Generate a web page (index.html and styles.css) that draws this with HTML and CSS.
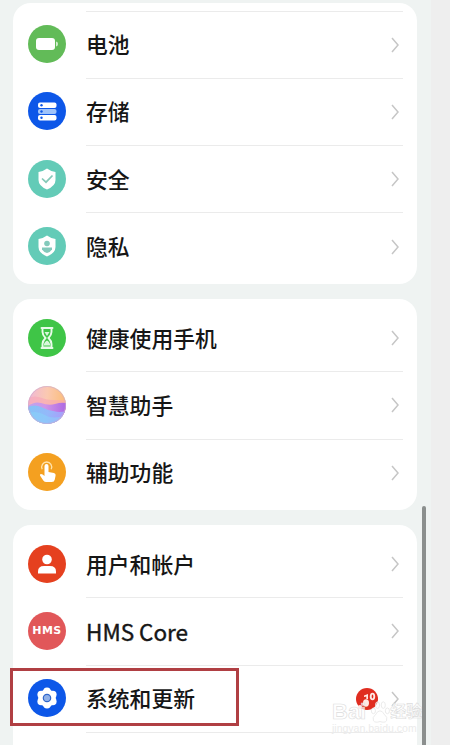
FILE: index.html
```html
<!DOCTYPE html>
<html lang="zh-CN">
<head>
  <meta charset="UTF-8">
  <title>设置</title>
  <link rel="stylesheet" href="styles.css">
</head>
<body>
  <div class="screen">
    <div class="card first">
      <div class="row">
        <svg class="icon" viewBox="0 0 38 38"><circle cx="19" cy="19" r="19" fill="#62bb58"/><rect x="8" y="13" width="19" height="12" rx="3" fill="#fff"/><path d="M28 16.5q2 .3 2 2.5t-2 2.5z" fill="#d5efd1"/></svg>
        <div class="item"><span>电池</span><svg class="arrow" viewBox="0 0 10 16"><path d="M2 1l6 7-6 7"/></svg></div>
      </div>
      <div class="row">
        <svg class="icon" viewBox="0 0 38 38"><circle cx="19" cy="19" r="19" fill="#0d57e8"/><rect x="10" y="10.5" width="18.5" height="5.5" rx="2" fill="#fff"/><rect x="10" y="17" width="18.500" height="5" rx="2" fill="#9fc3fa"/><rect x="10" y="23" width="18.500" height="5.500" rx="2" fill="#fff"/><g fill="#0d57e8"><circle cx="13.500" cy="13.200" r="1.200"/><circle cx="13.500" cy="19.500" r="1.200"/><circle cx="13.500" cy="25.800" r="1.200"/></g></svg>
        <div class="item"><span>存储</span><svg class="arrow" viewBox="0 0 10 16"><path d="M2 1l6 7-6 7"/></svg></div>
      </div>
      <div class="row">
        <svg class="icon" viewBox="0 0 38 38"><circle cx="19" cy="19" r="19" fill="#63cbb7"/><path d="M19 8.500q4 3 8.500 3.500v8q0 6-8.500 9.500-8.500-3.500-8.500-9.500v-8q4.500-.5 8.500-3.500z" fill="#fff"/><path d="M14 18.500l4 3.700 6.500-6.700" fill="none" stroke="#85c9b8" stroke-width="1.700"/></svg>
        <div class="item"><span>安全</span><svg class="arrow" viewBox="0 0 10 16"><path d="M2 1l6 7-6 7"/></svg></div>
      </div>
      <div class="row">
        <svg class="icon" viewBox="0 0 38 38"><circle cx="19" cy="19" r="19" fill="#63cbb7"/><path d="M19 8.500q4 3 8.500 3.500v8q0 6-8.500 9.500-8.500-3.500-8.500-9.500v-8q4.500-.5 8.500-3.500z" fill="#fff"/><circle cx="19" cy="16.500" r="2.800" fill="#83c9bb"/><path d="M14 20.500h10v2q-1.500 2.500-5 3.500-3.500-1-5-3.500z" fill="#83c9bb"/></svg>
        <div class="item"><span>隐私</span><svg class="arrow" viewBox="0 0 10 16"><path d="M2 1l6 7-6 7"/></svg></div>
      </div>
    </div>

    <div class="card">
      <div class="row">
        <svg class="icon" viewBox="0 0 38 38"><circle cx="19" cy="19" r="19" fill="#3fc547"/><path d="M13.500 9h11M13.500 29h11M14.500 9.500v3.500q0 3 3 6-3 3-3 6v3.500h9v-3.500q0-3-3-6 3-3 3-6v-3.500" fill="none" stroke="#e9fbea" stroke-width="1.900" stroke-linecap="round"/><path d="M16.500 13h5l-2.500 4zM15.500 26.500q1-4 3.500-5 2.500 1 3.500 5z" fill="#d9f7db"/></svg>
        <div class="item"><span>健康使用手机</span><svg class="arrow" viewBox="0 0 10 16"><path d="M2 1l6 7-6 7"/></svg></div>
      </div>
      <div class="row">
        <svg class="icon" viewBox="0 0 38 38">
          <defs>
            <linearGradient id="sky" x1="0" y1=".2" x2="1" y2=".3"><stop offset="0" stop-color="#efb7d6"/><stop offset=".5" stop-color="#fbc9b1"/><stop offset="1" stop-color="#fbbd78"/></linearGradient>
            <linearGradient id="wave" x1="0" y1="0" x2="1" y2="0"><stop offset="0" stop-color="#bca5ed"/><stop offset=".45" stop-color="#cf96e8"/><stop offset="1" stop-color="#ae68e2"/></linearGradient>
            <linearGradient id="sea" x1="0" y1="0" x2="1" y2=".3"><stop offset="0" stop-color="#84c4f5"/><stop offset=".6" stop-color="#94b8fa"/><stop offset="1" stop-color="#a99dfa"/></linearGradient>
            <clipPath id="ball"><circle cx="19" cy="19" r="19"/></clipPath>
          </defs>
          <g clip-path="url(#ball)">
            <path d="M0 0h38v38H0z" fill="url(#sky)"/>
            <path d="M0 12q7-3 14 0t24 2v9H0z" fill="#f8a5b5" opacity=".6"/>
            <path d="M0 20q7-5 13-3 8 3 14 1 6-2 11-1v21H0z" fill="url(#wave)"/>
            <path d="M0 21q7-3 13 0t12 4q7 2 13 0v13H0z" fill="url(#sea)"/>
            <path d="M0 27q9-3 17 2t21 0v9H0z" fill="#88d5fa" opacity=".5"/>
          </g>
          <circle cx="19" cy="19" r="18.500" fill="none" stroke="#c8acd2" opacity=".6"/>
        </svg>
        <div class="item"><span>智慧助手</span><svg class="arrow" viewBox="0 0 10 16"><path d="M2 1l6 7-6 7"/></svg></div>
      </div>
      <div class="row">
        <svg class="icon" viewBox="0 0 38 38"><circle cx="19" cy="19" r="19" fill="#f4a020"/><path d="M14.200 16.200a5 5 0 1 1 9 0" fill="none" stroke="#ffe3ad" stroke-width="1.300"/><path d="M16.500 13q0-2 2-2t2 2v6l5.500 1q2 .5 1.600 2.500l-.8 4q-.5 2.500-3 2.500h-5.500q-1.800 0-3-1.500L12 22.500q-.5-1.500 1-1.500 1.500 0 3.500 2z" fill="#fff"/></svg>
        <div class="item"><span>辅助功能</span><svg class="arrow" viewBox="0 0 10 16"><path d="M2 1l6 7-6 7"/></svg></div>
      </div>
    </div>

    <div class="card last">
      <div class="row">
        <svg class="icon" viewBox="0 0 38 38"><circle cx="19" cy="19" r="19" fill="#e5401f"/><circle cx="19" cy="14.500" r="4.800" fill="#fff"/><path d="M10 28.500v-2q0-5.500 6-5.500h6q6 0 6 5.500v2z" fill="#fff"/></svg>
        <div class="item"><span>用户和帐户</span><svg class="arrow" viewBox="0 0 10 16"><path d="M2 1l6 7-6 7"/></svg></div>
      </div>
      <div class="row">
        <div class="icon hms">HMS</div>
        <div class="item"><span class="latin">HMS Core</span><svg class="arrow" viewBox="0 0 10 16"><path d="M2 1l6 7-6 7"/></svg></div>
      </div>
      <div class="row">
        <svg class="icon" viewBox="0 0 38 38"><circle cx="19" cy="19" r="19" fill="#0d57e8"/><g fill="#fff"><circle cx="19" cy="19" r="8.800"/><circle cx="19" cy="12.300" r="3.800"/><circle cx="24.800" cy="15.600" r="3.800"/><circle cx="24.800" cy="22.400" r="3.800"/><circle cx="19" cy="25.700" r="3.800"/><circle cx="13.200" cy="22.400" r="3.800"/><circle cx="13.200" cy="15.600" r="3.800"/></g><circle cx="19" cy="19" r="3.700" fill="#8fb0e8" stroke="#2f65ca" stroke-width="1.200"/></svg>
        <div class="item">
          <span>系统和更新</span>
          <svg class="badge" viewBox="0 0 22 22"><circle cx="11" cy="11" r="11" fill="#e02d20"/><g fill="#ffe9e4"><ellipse cx="10" cy="15" rx="3" ry="3.700"/><ellipse cx="16.500" cy="8.500" rx="2.700" ry="3.800"/><path d="M8 7.500l4-1.500v5h-1.700V8.500L8 9z"/><circle cx="4" cy="19" r="2"/></g><ellipse cx="16.500" cy="8.500" rx=".8" ry="2" fill="#e02d20"/></svg>
          <svg class="arrow" viewBox="0 0 10 16"><path d="M2 1l6 7-6 7"/></svg>
        </div>
      </div>
      <div class="row"><div class="item"></div></div>
    </div>

    <div class="highlight"></div>
    <div class="watermark">
      <div class="brand"><span>Bai</span><svg class="paw" viewBox="0 0 24 28"><ellipse cx="4" cy="12" rx="2.500" ry="3.500"/><ellipse cx="9" cy="5" rx="2.500" ry="4"/><ellipse cx="16" cy="5" rx="2.500" ry="4"/><ellipse cx="21" cy="12" rx="2.500" ry="3.500"/><path d="M12 12q-3 0-5 4-5 4-3 8 2 3 8 1 6 2 8-1 2-4-3-8-2-4-5-4z"/></svg><span class="cn">经验</span></div>
      <div class="site">jingyan.baidu.com</div>
    </div>
    <div class="scrollbar"></div>
  </div>
</body>
</html>
```
FILE: styles.css
```css
body {
  margin: 0;
  background: #eeeeee;
  font-family: 'Noto Sans CJK SC', sans-serif;
  color: #161616;
}

.screen {
  position: relative;
  box-sizing: border-box;
  width: 431px;
  height: 745px;
  padding: 3px 14px 0 13px;
  background: #eff3f2;
  overflow: hidden;
}

.card {
  box-sizing: border-box;
  height: 211px;
  margin-bottom: 15px;
  padding: 5px 14px 0 15px;
  border-radius: 18px;
  background: #fff;
}

.first {
  height: 281px;
  padding-top: 7.5px;
}

.last {
  height: 260px;
}

.row {
  display: flex;
  height: 67.3px;
  align-items: center;
}

.icon {
  flex: none;
  width: 38px;
  height: 38px;
  margin-right: 20px;
}

.item {
  box-sizing: border-box;
  display: flex;
  flex: 1;
  height: 100%;
  align-items: center;
  border-top: 1px solid #ebebeb;
  font-size: 21.8px;
  font-weight: 500;
  line-height: 30px;
}

.item span {
  padding-bottom: 1px;
}

.row:last-child > .item:empty {
  margin-left: 58px;
}

.card:not(.first) .row:first-child .item {
  border-top-color: transparent;
}

.item .latin {
  padding-bottom: 0;
  font-size: 22.5px;
  font-weight: 400;
  -webkit-text-stroke: 0.4px #161616;
}

.arrow {
  width: 10px;
  height: 16px;
  margin-left: auto;
  margin-right: 3px;
  fill: none;
  stroke: #c6c6c6;
  stroke-width: 1.5;
}

.hms {
  border-radius: 50%;
  background: #e15759;
  color: #fff;
  font: bold 11px/38px 'DejaVu Sans', sans-serif;
  letter-spacing: 0.5px;
  text-align: center;
}

.badge {
  width: 22px;
  height: 22px;
  margin-left: auto;
}

.badge + .arrow {
  margin-left: 12px;
}

.highlight {
  position: absolute;
  box-sizing: border-box;
  top: 668px;
  left: 10px;
  width: 229px;
  height: 58px;
  border: 3px solid #b03f43;
}

.scrollbar {
  position: absolute;
  top: 506px;
  left: 422px;
  width: 4px;
  height: 250px;
  border-radius: 2px;
  background: #8b8f8e;
}

.watermark {
  position: absolute;
  top: 702px;
  left: 332px;
  width: 98px;
  color: rgba(255, 255, 255, 0.7);
  font-family: 'Liberation Sans', 'Noto Sans CJK SC', sans-serif;
}

.brand {
  display: flex;
  height: 20px;
  align-items: center;
  font-size: 22px;
  font-weight: bold;
  line-height: 22px;
  -webkit-text-stroke: 0.6px #dcdcdc;
}

.paw {
  width: 20px;
  height: 23px;
  margin-left: 4px;
  fill: #fff;
  fill-opacity: 0.5;
  stroke: #e6e6e6;
}

.cn {
  font-size: 16px;
}

.site {
  color: #ebebeb;
  font-size: 10.5px;
  line-height: 12px;
}
```
